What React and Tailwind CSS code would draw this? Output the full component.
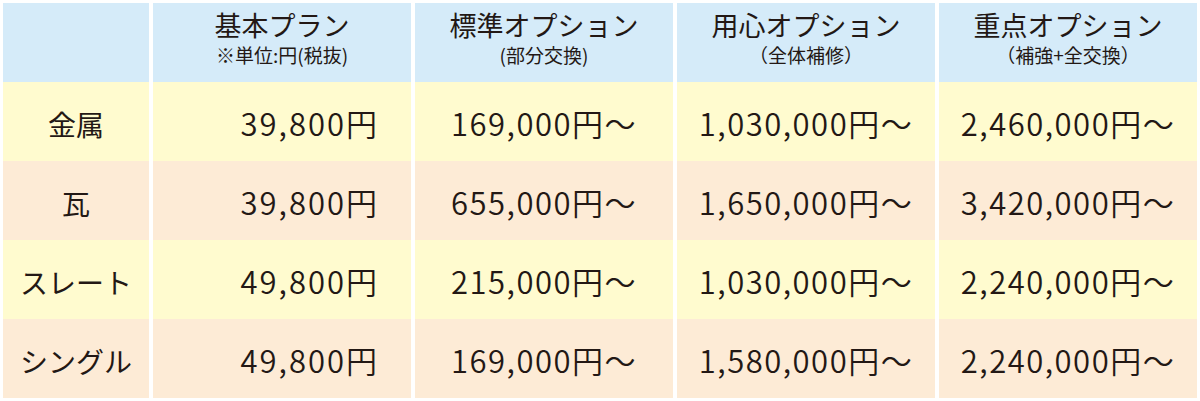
import React from 'react'

const font = { fontFamily: '"Noto Sans CJK JP", "Noto Sans", sans-serif' }

const HEADERS = [
  { title: '基本プラン', sub: '※単位:円(税抜)' },
  { title: '標準オプション', sub: '(部分交換)' },
  { title: '用心オプション', sub: '（全体補修）' },
  { title: '重点オプション', sub: '（補強+全交換）' },
]

const ROWS = [
  { name: '金属', base: '39,800円', prices: ['169,000円〜', '1,030,000円〜', '2,460,000円〜'] },
  { name: '瓦', base: '39,800円', prices: ['655,000円〜', '1,650,000円〜', '3,420,000円〜'] },
  { name: 'スレート', base: '49,800円', prices: ['215,000円〜', '1,030,000円〜', '2,240,000円〜'] },
  { name: 'シングル', base: '49,800円', prices: ['169,000円〜', '1,580,000円〜', '2,240,000円〜'] },
]

export default function App() {
  return (
    <div className="w-[1200px] h-[401px] bg-white pt-[3px] pl-[3px] text-[#231815]" style={font}>
      <div className="grid grid-cols-[146px_repeat(4,258px)] gap-x-[4px]">
        <div className="h-[79px] bg-[#d5ebf9]" />
        {HEADERS.map(h => (
          <div key={h.title} className="h-[79px] bg-[#d5ebf9] flex flex-col items-center pt-[7px]">
            <div className="text-[27px] leading-[30px]">{h.title}</div>
            <div className="text-[19px] leading-[22px] mt-[4px]">{h.sub}</div>
          </div>
        ))}

        {ROWS.map((r, i) => {
          const bg = i % 2 === 0 ? 'bg-[#fffbcf]' : 'bg-[#fdebd6]'
          return (
            <React.Fragment key={r.name}>
              <div className={`h-[79px] ${bg} flex items-center justify-center text-[28px] pt-[4px]`}>{r.name}</div>
              <div className={`h-[79px] ${bg} flex items-center justify-end pr-[32px] text-[31px] font-[350] tracking-[2px] pt-[4px]`}>{r.base}</div>
              {r.prices.map((p, j) => (
                <div key={j} className={`h-[79px] ${bg} flex items-center justify-center text-[31px] font-[350] tracking-[1.5px] pt-[4px]`}>{p}</div>
              ))}
            </React.Fragment>
          )
        })}
      </div>
    </div>
  )
}
